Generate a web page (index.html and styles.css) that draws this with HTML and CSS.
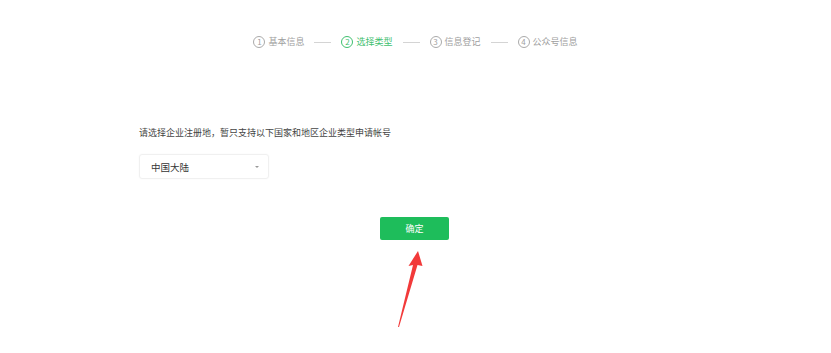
FILE: index.html
```html
<!DOCTYPE html>
<html lang="zh-CN">
<head>
    <meta charset="UTF-8">
    <title>选择类型</title>
    <link rel="stylesheet" href="styles.css">
</head>
<body>
    <div class="page">
        <ul class="steps">
            <li class="step"><span class="num">1</span>基本信息</li>
            <li class="sep"></li>
            <li class="step active"><span class="num">2</span>选择类型</li>
            <li class="sep"></li>
            <li class="step"><span class="num">3</span>信息登记</li>
            <li class="sep"></li>
            <li class="step"><span class="num">4</span>公众号信息</li>
        </ul>

        <div class="form">
            <p class="tip">请选择企业注册地，暂只支持以下国家和地区企业类型申请帐号</p>
            <div class="select">
                <span>中国大陆</span>
                <i class="caret"></i>
            </div>
        </div>

        <div class="actions">
            <button class="btn">确定</button>
        </div>

        <!-- red annotation arrow -->
        <svg class="arrow" width="40" height="90" viewBox="0 0 40 90">
            <path d="M27 11 L31.5 26 L26.5 25 L8 87 L7 87 L22 25 L17.5 26 Z" fill="#f23a3a"/>
        </svg>
    </div>
</body>
</html>
```

FILE: styles.css
```css
body {
    margin: 0;
    background: #fff;
    font-family: "Noto Sans CJK SC", "Noto Sans", sans-serif;
    color: #353535;
}

.page {
    position: relative;
    width: 831px;
    height: 353px;
}

/* step bar */
.steps {
    list-style: none;
    margin: 0;
    padding: 35px 0 0;
    display: flex;
    justify-content: center;
    align-items: center;
    gap: 10px;
    font-size: 9px;
    line-height: 14px;
    color: #a0a0a0;
}

.step {
    display: flex;
    align-items: center;
    gap: 3px;
}

.num {
    width: 10px;
    height: 10px;
    border: 1px solid #aaa;
    border-radius: 50%;
    font-size: 8px;
    line-height: 10px;
    text-align: center;
}

.step.active {
    color: #3fc06f;
}

.step.active .num {
    border-color: #3fc06f;
}

.sep {
    width: 17px;
    height: 1px;
    background: #d4d4d4;
}

/* form */
.form {
    padding: 77px 0 0 139px;
}

.tip {
    margin: 0;
    font-size: 9px;
    line-height: 14px;
    color: #444;
}

.select {
    margin-top: 14px;
    width: 130px;
    height: 25px;
    box-sizing: border-box;
    border: 1px solid #f0f0f0;
    border-radius: 3px;
    box-shadow: 0 0 2px rgba(0, 0, 0, 0.04);
    display: flex;
    align-items: center;
    justify-content: space-between;
    padding: 0 9px 0 11px;
    font-size: 9.5px;
    color: #353535;
}

.caret {
    width: 0;
    height: 0;
    border-left: 2px solid transparent;
    border-right: 2px solid transparent;
    border-top: 2.5px solid #999;
}

.actions {
    display: flex;
    justify-content: center;
    padding-top: 38px;
}

.btn {
    width: 69px;
    height: 23px;
    border: none;
    border-radius: 2px;
    background: #1ebd5b;
    color: #fff;
    font-family: inherit;
    font-size: 9px;
    padding: 0;
    margin-left: -2px;
}

.arrow {
    position: absolute;
    left: 391px;
    top: 240px;
}
```
